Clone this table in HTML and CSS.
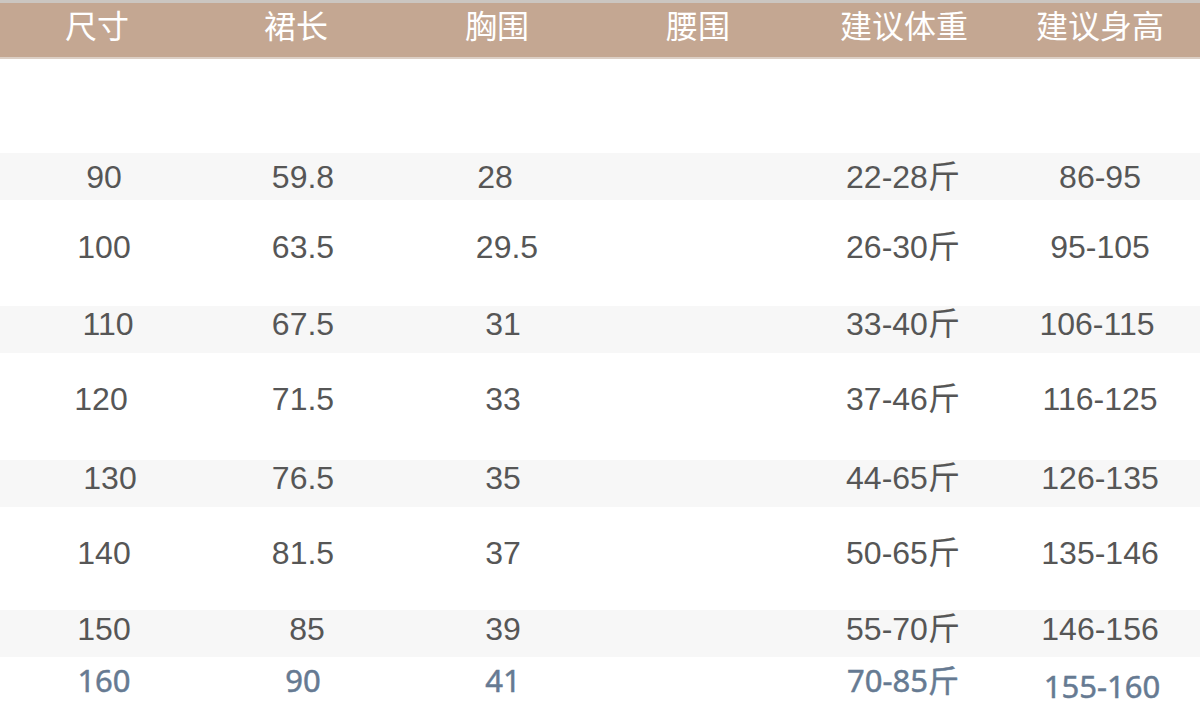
FILE: index.html
```html
<!DOCTYPE html>
<html lang="zh">
<head>
<meta charset="utf-8">
<title>尺码表</title>
<link rel="stylesheet" href="styles.css">
</head>
<body>
<div class="chart">
  <div class="head">
    <div>尺寸</div><div>裙长</div><div>胸围</div><div>腰围</div><div>建议体重</div><div>建议身高</div>
  </div>
  <div class="spacer"></div>
  <div class="row band r1"><div>90</div><div>59.8</div><div class="l">28</div><div></div><div>22-28斤</div><div>86-95</div></div>
  <div class="row r2"><div>100</div><div>63.5</div><div class="r">29.5</div><div></div><div>26-30斤</div><div>95-105</div></div>
  <div class="row band r3"><div class="r">110</div><div>67.5</div><div>31</div><div></div><div>33-40斤</div><div class="ls">106-115</div></div>
  <div class="row r4"><div class="ls">120</div><div>71.5</div><div>33</div><div></div><div>37-46斤</div><div>116-125</div></div>
  <div class="row band r5"><div class="rr">130</div><div>76.5</div><div>35</div><div></div><div>44-65斤</div><div>126-135</div></div>
  <div class="row r6"><div>140</div><div>81.5</div><div>37</div><div></div><div>50-65斤</div><div>135-146</div></div>
  <div class="row band r7"><div>150</div><div class="r">85</div><div>39</div><div></div><div>55-70斤</div><div>146-156</div></div>
  <div class="row last r8"><div>160</div><div>90</div><div>41</div><div></div><div>70-85斤</div><div class="low">155-160</div></div>
</div>
</body>
</html>
```
FILE: styles.css
```css
html, body {
  margin: 0;
  padding: 0;
  background: #ffffff;
}
.chart {
  width: 1200px;
  height: 720px;
  overflow: hidden;
  font-family: "Liberation Sans", Arial, "Noto Sans CJK SC", sans-serif;
}
.head {
  display: grid;
  grid-template-columns: 194px 204px 198px 204px 208px 184px;
  height: 54px;
  border-top: 3px solid #cbc6c1;
  border-bottom: 2px solid #dccfc5;
  background: #c4a792;
  color: #ffffff;
  font-family: "Noto Sans CJK SC", sans-serif;
  font-size: 32px;
  line-height: 32px;
  box-sizing: content-box;
}
.head > div {
  text-align: center;
  padding-top: 5px;
}
.spacer {
  height: 94px;
}
.row {
  display: grid;
  grid-template-columns: 208px 190px 210px 184px 222px 172px;
  font-size: 32px;
  line-height: 36px;
  color: #565656;
  box-sizing: border-box;
}
.row > div {
  text-align: center;
}
.band {
  background: #f7f7f7;
  height: 47px;
}
.r1 { padding-top: 6px; }
.r2 { height: 106px; padding-top: 29px; }
.r3 { padding-top: 0px; }
.r4 { height: 107px; padding-top: 28px; }
.r5 { padding-top: 0px; }
.r6 { height: 103px; padding-top: 28px; }
.r7 { padding-top: 1px; }
.last {
  height: 64px;
  padding-top: 5px;
  color: #667a92;
  font-family: "Noto Sans", "Noto Sans CJK SC", sans-serif;
  font-size: 31px;
  -webkit-text-stroke: 0.5px #667a92;
}
.l { position: relative; left: -8px; }
.ls { position: relative; left: -3px; }
.r { position: relative; left: 4px; }
.rr { position: relative; left: 6px; }
.low { position: relative; top: 6px; left: 2px; }
```
